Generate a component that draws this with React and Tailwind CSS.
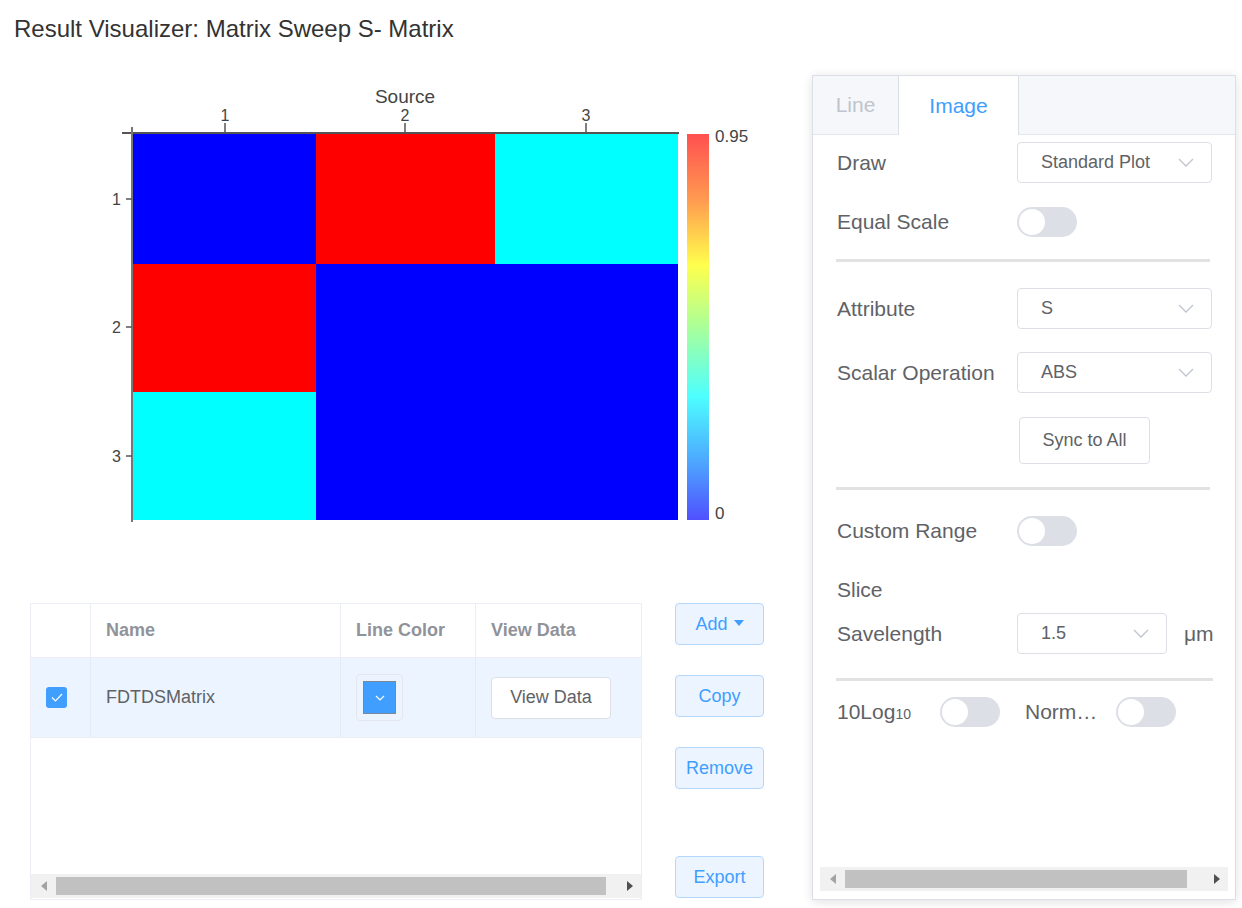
import React from 'react'

const cellColors = [
  ['#0000ff', '#ff0000', '#00ffff'],
  ['#ff0000', '#0000ff', '#0000ff'],
  ['#00ffff', '#0000ff', '#0000ff'],
]

const colX = [133, 316, 495, 678]
const rowY = [59, 189, 317, 445]

const HeatMap = () => (
  <svg width="812" height="528" className="block">
    <defs>
      <linearGradient id="cbar" x1="0" y1="0" x2="0" y2="1">
        <stop offset="0" stopColor="#ff5050" />
        <stop offset="0.17" stopColor="#ff9a50" />
        <stop offset="0.34" stopColor="#ffff4d" />
        <stop offset="0.5" stopColor="#aaff99" />
        <stop offset="0.68" stopColor="#4dffff" />
        <stop offset="0.85" stopColor="#4da6ff" />
        <stop offset="1" stopColor="#5050ff" />
      </linearGradient>
    </defs>

    {cellColors.map((row, r) =>
      row.map((c, k) => (
        <rect
          key={`${r}-${k}`}
          x={colX[k]}
          y={rowY[r]}
          width={colX[k + 1] - colX[k]}
          height={rowY[r + 1] - rowY[r]}
          fill={c}
        />
      ))
    )}

    {/* axes */}
    <line x1="122" y1="58" x2="679" y2="58" stroke="#555" strokeWidth="2" />
    <line x1="132" y1="52" x2="132" y2="447" stroke="#777" strokeWidth="2" />
    {[225, 405, 586].map((x, i) => (
      <g key={x}>
        <line x1={x} y1="48" x2={x} y2="58" stroke="#555" strokeWidth="1.5" />
        <text x={x} y="46" textAnchor="middle" fontSize="16" fill="#444">{i + 1}</text>
      </g>
    ))}
    {[124, 252, 381].map((y, i) => (
      <g key={y}>
        <line x1="126" y1={y} x2="132" y2={y} stroke="#555" strokeWidth="1.5" />
        <text x="121" y={y + 6} textAnchor="end" fontSize="16" fill="#444">{i + 1}</text>
      </g>
    ))}
    <text x="405" y="28" textAnchor="middle" fontSize="19" fill="#444">Source</text>

    {/* color bar */}
    <rect x="687" y="59" width="22" height="386" fill="url(#cbar)" />
    <text x="715" y="67" fontSize="17" fill="#444">0.95</text>
    <text x="715" y="444" fontSize="17" fill="#444">0</text>
  </svg>
)

const Chevron = ({ className = '', color = '#c0c4cc' }) => (
  <svg width="16" height="9" viewBox="0 0 16 9" className={className}>
    <path d="M1 1 L8 8 L15 1" fill="none" stroke={color} strokeWidth="1.3" />
  </svg>
)

const ScrollBar = ({ thumbLeft, thumbRight }) => (
  <div className="h-[24px] bg-[#f1f1f1] relative">
    <svg width="6" height="10" viewBox="0 0 6 10" className="absolute left-[10px] top-[7px]">
      <path d="M6 0 L0 5 L6 10 Z" fill="#a3a3a3" />
    </svg>
    <div
      className="absolute top-[3px] bottom-[3px] bg-[#c1c1c1]"
      style={{ left: thumbLeft, right: thumbRight }}
    />
    <svg width="6" height="10" viewBox="0 0 6 10" className="absolute right-[8px] top-[7px]">
      <path d="M0 0 L6 5 L0 10 Z" fill="#505050" />
    </svg>
  </div>
)

const DataTable = () => (
  <div className="w-[612px] h-[297px] border border-[#ebeef5] flex flex-col">
    <div className="h-[54px] flex border-b border-[#ebeef5] text-[18px] font-bold text-[#909399]">
      <div className="w-[60px] border-r border-[#ebeef5]" />
      <div className="w-[250px] border-r border-[#ebeef5] flex items-center pl-[15px]">Name</div>
      <div className="w-[135px] border-r border-[#ebeef5] flex items-center pl-[15px]">Line Color</div>
      <div className="flex-1 flex items-center pl-[15px]">View Data</div>
    </div>
    <div className="h-[80px] flex bg-[#ecf5ff] border-b border-[#ebeef5] text-[18px] text-[#606266]">
      <div className="w-[60px] border-r border-[#e4ecf5] flex items-center pl-[15px]">
        <div className="w-[21px] h-[21px] rounded-[3px] bg-[#409eff] flex items-center justify-center">
          <svg width="12" height="9" viewBox="0 0 12 9">
            <path d="M1 4.5 L4.5 8 L11 1" fill="none" stroke="#fff" strokeWidth="1.2" />
          </svg>
        </div>
      </div>
      <div className="w-[250px] border-r border-[#e4ecf5] flex items-center pl-[15px]">FDTDSMatrix</div>
      <div className="w-[135px] border-r border-[#e4ecf5] flex items-center pl-[15px]">
        <div className="w-[47px] h-[47px] border border-[#e4e7ed] rounded-[4px] flex items-center justify-center">
          <div className="w-[33px] h-[33px] bg-[#409eff] border border-[#7a8899] flex items-center justify-center">
            <svg width="10" height="6" viewBox="0 0 10 6">
              <path d="M1 1 L5 5 L9 1" fill="none" stroke="#fff" strokeWidth="1.2" />
            </svg>
          </div>
        </div>
      </div>
      <div className="flex-1 flex items-center pl-[15px]">
        <button className="w-[120px] h-[42px] bg-white border border-[#dcdfe6] rounded-[4px] text-[18px] text-[#606266]">
          View Data
        </button>
      </div>
    </div>
    <div className="flex-1" />
    <div className="mb-[1px]">
      <ScrollBar thumbLeft="25px" thumbRight="35px" />
    </div>
  </div>
)

const SideButton = ({ children, className = '' }) => (
  <button
    className={`h-[42px] w-[89px] bg-[#ecf5ff] border border-[#b3d8ff] rounded-[4px] text-[18px] text-[#409eff] flex items-center justify-center ${className}`}
  >
    {children}
  </button>
)

const Select = ({ value, width = 'w-[195px]' }) => (
  <div className={`${width} h-[41px] border border-[#dcdfe6] rounded-[4px] flex items-center justify-between pl-[23px] pr-[17px] text-[18px] text-[#606266]`}>
    <span>{value}</span>
    <Chevron />
  </div>
)

const Switch = () => (
  <div className="w-[60px] h-[30px] rounded-full bg-[#dcdfe6] relative">
    <div className="absolute left-[2px] top-[2px] w-[26px] h-[26px] rounded-full bg-white" />
  </div>
)

const Row = ({ label, children, className = '', h = 'h-[41px]' }) => (
  <div className={`flex items-center ${h} ${className}`}>
    <div className="w-[180px] text-[21px] text-[#606266]">{label}</div>
    {children}
  </div>
)

const Divider = ({ className = 'w-[374px]' }) => (
  <div className={`h-[3px] bg-[#e2e2e2] -ml-[1px] ${className}`} />
)

const SettingsPanel = () => (
  <div className="w-[424px] h-[825px] border border-[#dcdfe6] shadow-[0_2px_10px_rgba(0,0,0,0.12)] flex flex-col bg-white">
    <div className="h-[59px] flex bg-[#f5f7fa] border-b border-[#e4e7ed] text-[21px]">
      <div className="w-[85px] flex items-center justify-center text-[#c0c4cc]">Line</div>
      <div className="w-[121px] -mb-[1px] bg-white border-l border-r border-[#dcdfe6] flex items-center justify-center text-[#409eff]">
        Image
      </div>
    </div>
    <div className="pl-[24px] flex flex-col">
      <Row label="Draw" className="mt-[7px]">
        <Select value="Standard Plot" />
      </Row>
      <Row label="Equal Scale" h="h-[30px]" className="mt-[24px]">
        <Switch />
      </Row>
      <div className="mt-[22px]">
        <Divider />
      </div>
      <Row label="Attribute" className="mt-[26px]">
        <Select value="S" />
      </Row>
      <Row label="Scalar Operation" className="mt-[23px]">
        <Select value="ABS" />
      </Row>
      <div className="mt-[24px] pl-[182px]">
        <button className="w-[131px] h-[47px] border border-[#dcdfe6] rounded-[4px] bg-white text-[18px] text-[#606266]">
          Sync to All
        </button>
      </div>
      <div className="mt-[23px]">
        <Divider />
      </div>
      <Row label="Custom Range" h="h-[30px]" className="mt-[26px]">
        <Switch />
      </Row>
      <Row label="Slice" h="h-[30px]" className="mt-[29px]" />
      <Row label="Savelength" className="mt-[8px]">
        <Select value="1.5" width="w-[150px]" />
        <span className="ml-[17px] text-[21px] text-[#606266]">μm</span>
      </Row>
      <div className="mt-[24px]">
        <Divider className="w-[377px]" />
      </div>
      <div className="mt-[16px] h-[30px] flex items-center text-[21px] text-[#606266]">
        <span className="w-[103px]">
          10Log<span className="text-[14px]">10</span>
        </span>
        <Switch />
        <span className="ml-[25px] w-[91px]">Norm…</span>
        <Switch />
      </div>
    </div>
    <div className="flex-1" />
    <div className="mx-[7px] mb-[8px]">
      <ScrollBar thumbLeft="25px" thumbRight="41px" />
    </div>
  </div>
)

const App = () => {
  return (
    <div className="w-[1242px] h-[908px] overflow-hidden bg-white font-['Liberation_Sans',Arial,sans-serif]">
      <div className="h-[75px] pl-[14px] pt-[14px] text-[24px] leading-[30px] text-[#333]">
        Result Visualizer: Matrix Sweep S- Matrix
      </div>
      <div className="flex">
        <div className="w-[812px]">
          <HeatMap />
          <div className="flex pl-[30px]">
            <DataTable />
            <div className="ml-[33px] flex flex-col">
              <SideButton>
                Add
                <svg width="10" height="6" viewBox="0 0 10 6" className="ml-[6px] -mt-[3px]">
                  <path d="M0 0 L10 0 L5 6 Z" fill="#409eff" />
                </svg>
              </SideButton>
              <SideButton className="mt-[30px]">Copy</SideButton>
              <SideButton className="mt-[30px]">Remove</SideButton>
              <SideButton className="mt-[67px]">Export</SideButton>
            </div>
          </div>
        </div>
        <SettingsPanel />
      </div>
    </div>
  )
}

export default App
